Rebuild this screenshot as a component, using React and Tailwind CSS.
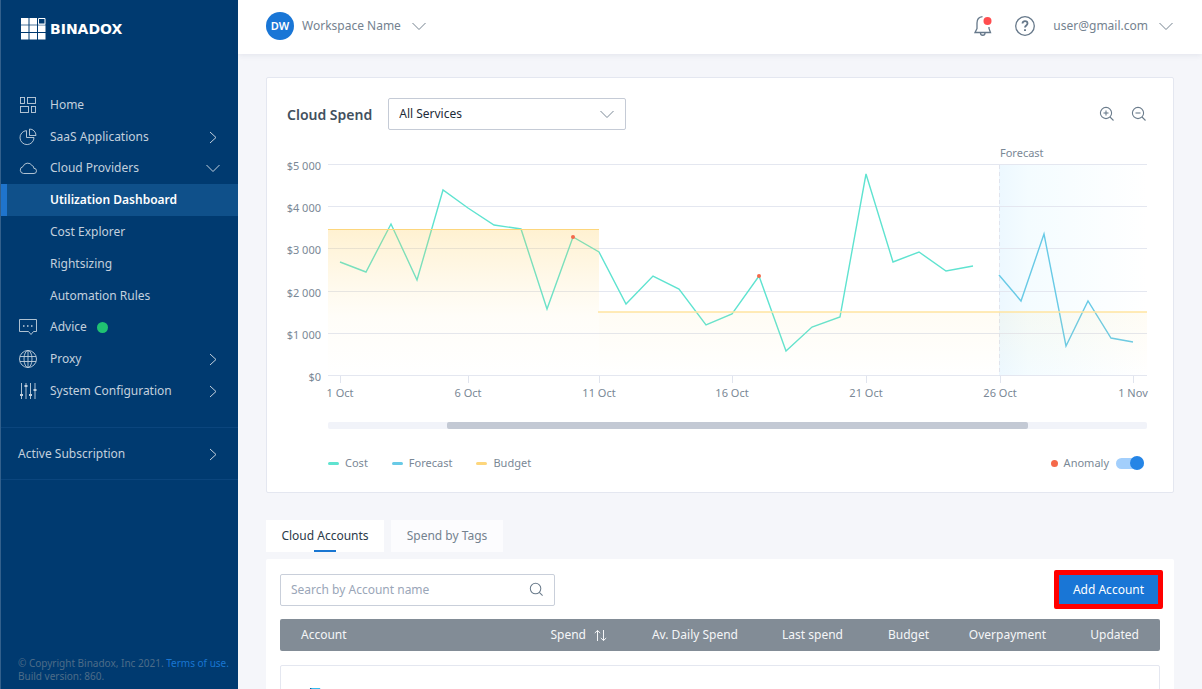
import React, { useState } from 'react';

const navItems = [
  { label: 'Home', icon: 'home' },
  { label: 'SaaS Applications', icon: 'pie', arrow: 'right' },
  { label: 'Cloud Providers', icon: 'cloud', arrow: 'down' },
  { label: 'Utilization Dashboard', active: true },
  { label: 'Cost Explorer' },
  { label: 'Rightsizing' },
  { label: 'Automation Rules' },
  { label: 'Advice', icon: 'advice', dot: true },
  { label: 'Proxy', icon: 'globe', arrow: 'right' },
  { label: 'System Configuration', icon: 'sliders', arrow: 'right' },
];

const yTicks = [
  { label: '$5 000', y: 0 },
  { label: '$4 000', y: 42 },
  { label: '$3 000', y: 84 },
  { label: '$2 000', y: 127 },
  { label: '$1 000', y: 169 },
  { label: '$0', y: 211 },
];

const xTicks = [
  { label: '1 Oct', x: 12 },
  { label: '6 Oct', x: 140 },
  { label: '11 Oct', x: 271 },
  { label: '16 Oct', x: 404 },
  { label: '21 Oct', x: 538 },
  { label: '26 Oct', x: 672 },
  { label: '1 Nov', x: 805 },
];

const costLine =
  '12,97 38,107 63,59 89,115 115,25 140,43 166,60 193,64 219,144 245,72 271,87 298,139 325,111 351,124 378,160 404,149 431,111 458,186 484,162 512,152 538,9 565,97 591,87 618,106 645,101';
const forecastLine = '671,110 693,136 716,69 738,181 760,136 783,173 805,177';

const anomalies = [
  { x: 245, y: 72 },
  { x: 431, y: 111 },
];

const Chevron = ({ dir = 'down', className }) => (
  <svg viewBox="0 0 14 14" className={className} fill="none" stroke="currentColor" strokeWidth="1" aria-hidden="true">
    {dir === 'right' ? <path d="M4 2l6 5.5L4 13" /> : <path d="M0.500 4l6.500 6.500L13.500 4" />}
  </svg>
);

const NavIcon = ({ name }) => {
  const shapes = {
    home: (
      <>
        <rect x="1.5" y="1.5" width="4" height="6" />
        <rect x="8.5" y="1.5" width="8" height="6" />
        <rect x="1.5" y="10.5" width="8" height="6" />
        <rect x="12.5" y="10.5" width="4" height="6" />
      </>
    ),
    pie: (
      <>
        <path d="M7.5 2.6A7 7 0 1 0 15 9.500H7.500z" />
        <path d="M10.500 1v6.500h6.500A6.500 6.500 0 0 0 10.500 1z" />
      </>
    ),
    cloud: <path d="M4.500 14.500a3.500 3.500 0 0 1-.5-6.900A5 5 0 0 1 13 6.500a2.500 2.500 0 0 1 1.800 2.800 2.600 2.600 0 0 1 .2 5.200z" />,
    advice: (
      <>
        <path d="M.5 1.500h17v12h-3l-2.500 3-2.500-3H.5z" />
        <path d="M4 8h1.500M8 8h1.500M12 8h1.500" strokeWidth="1.500" />
      </>
    ),
    globe: (
      <>
        <circle cx="9" cy="9" r="8.500" />
        <ellipse cx="9" cy="9" rx="4" ry="8.500" />
        <path d="M9 .5v17M1 6.500h16M1 11.500h16" />
      </>
    ),
    sliders: (
      <>
        <path d="M2.500 1v16M7 1v16M11.500 1v16M16 1v16" />
        <path d="M1 13h3M5.500 4h3M10 13h3M14.500 8h3" strokeWidth="2" />
      </>
    ),
  };
  return (
    <svg viewBox="0 0 18 18" className="h-[18px] w-[18px]" fill="none" stroke="currentColor" strokeWidth="0.9" aria-hidden="true">
      {shapes[name]}
    </svg>
  );
};

const Magnifier = ({ sign, className }) => (
  <svg viewBox="0 0 16 16" className={className} fill="none" stroke="currentColor" strokeWidth="1.1" aria-hidden="true">
    <circle cx="7" cy="7" r="5.600" />
    <path d="M11 11l3.500 3.500" />
    {sign && <path d="M4.500 7h5" />}
    {sign === 'plus' && <path d="M7 4.500v5" />}
  </svg>
);

const Logo = () => (
  <a href="#home" className="flex items-center gap-1 text-white">
    <svg viewBox="0 0 25 22" className="h-[22px] w-[25px]" fill="currentColor" aria-hidden="true">
      <path d="M0 0h7.500v6H0zM8.500 0H16v6H8.500zM0 8h7.500v6H0zM8.500 8H16v6H8.500zM17 8h7.500v6H17zM0 15h7.500v6.500H0zM8.500 15H16v6.500H8.500zM17 15h7.500v6.500H17z" />
      <path d="M0 6h7.500v2H0zM8.500 6H16v2H8.500zM17 6h7.500v2H17z" opacity="0.65" />
      <path d="M17.500.5h6.500v5.500h-6.500z" fill="#003a70" stroke="currentColor" />
    </svg>
    <span className="font-['DejaVu_Sans',sans-serif] text-[14px] leading-none font-bold">BINADOX</span>
  </a>
);

const Sidebar = () => (
  <aside className="flex w-[238px] shrink-0 flex-col border-l border-[#33608c] bg-[#003a70] text-[12px] text-[#c3d0dd]">
    <div className="flex h-[89px] items-start pt-[18px] pl-5">
      <Logo />
    </div>
    <nav className="flex h-[318px] flex-col">
      {navItems.map((item) => (
        <a
          key={item.label}
          href="#nav"
          className={
            item.active
              ? 'flex flex-1 items-center border-l-[6px] border-[#1f74cc] bg-[#0f508a] pl-[43px] font-semibold text-white'
              : 'flex flex-1 items-center pr-[18px] pl-[18px]'
          }
        >
          {!item.active && <span className="w-[31px]">{item.icon && <NavIcon name={item.icon} />}</span>}
          <span>{item.label}</span>
          {item.dot && <span className="ml-[10px] h-[11px] w-[11px] rounded-full bg-[#20c272]" />}
          {item.arrow && <Chevron dir={item.arrow} className="ml-auto h-[14px] w-[14px]" />}
        </a>
      ))}
    </nav>
    <a href="#subscription" className="mt-[20px] flex h-[53px] items-center justify-between border-y border-[#0b457d] pr-[18px] pl-[17px]">
      Active Subscription
      <Chevron dir="right" className="h-[14px] w-[14px]" />
    </a>
    <footer className="mt-auto pb-[6px] pl-[17px] text-[10px] leading-[13px] text-[#4d6c88]">
      <p>
        © Copyright Binadox, Inc 2021.{' '}
        <a href="#terms" className="text-[#1976d2]">
          Terms of use.
        </a>
      </p>
      <p>Build version: 860.</p>
    </footer>
  </aside>
);

const Header = () => (
  <header className="relative flex h-[54px] shrink-0 items-center justify-between bg-white pr-[29px] pb-[2px] pl-7 text-[12px] text-[#74828f] shadow-[0_1px_6px_rgba(60,70,110,0.1)]">
    <button className="flex items-center">
      <span className="flex h-7 w-7 items-center justify-center rounded-full bg-[#1976d6] text-[11px] font-semibold text-white">DW</span>
      <span className="ml-2">Workspace Name</span>
      <Chevron className="ml-[11px] h-[14px] w-[14px]" />
    </button>
    <div className="flex items-center">
      <button aria-label="Notifications">
        <svg viewBox="0 0 20 22" className="h-[22px] w-5" fill="none" stroke="#66788a" strokeWidth="1.300">
          <path d="M9.500 1.700C5.500 2.200 4 5 4 8v5.500L2 17.500h15.500L16 13.500v-1.500" />
          <path d="M7.500 18a2.200 2.200 0 0 0 4.500 0" />
          <circle cx="14.500" cy="6" r="4" fill="#ff4d4f" stroke="none" />
        </svg>
      </button>
      <button aria-label="Help" className="ml-[21px]">
        <svg viewBox="0 0 22 22" className="h-[22px] w-[22px]" fill="none" stroke="#66788a">
          <circle cx="11" cy="11" r="9.300" strokeWidth="1.300" />
          <path d="M8.500 8.500c0-3.200 5-3 5 0 0 1.900-2.500 2-2.500 4" strokeWidth="1.800" />
          <path d="M11 14.200v1.900" strokeWidth="1.900" />
        </svg>
      </button>
      <button className="ml-[17px] flex items-center">
        user@gmail.com
        <Chevron className="ml-[11px] h-[14px] w-[14px]" />
      </button>
    </div>
  </header>
);

const SpendChart = () => (
  <svg viewBox="0 0 860 255" className="mt-[15px] h-auto w-full overflow-visible text-[11px]" role="img" aria-label="Cloud spend by day">
    <defs>
      <linearGradient id="budgetFill" x1="0" y1="0" x2="0" y2="1">
        <stop offset="0" stopColor="#ffc94d" stopOpacity="0.26" />
        <stop offset="0.6" stopColor="#ffd978" stopOpacity="0.05" />
        <stop offset="1" stopColor="#ffd978" stopOpacity="0" />
      </linearGradient>
      <linearGradient id="budgetFillLow" x1="0" y1="0" x2="0" y2="1">
        <stop offset="0" stopColor="#ffd978" stopOpacity="0.08" />
        <stop offset="1" stopColor="#ffd978" stopOpacity="0" />
      </linearGradient>
      <linearGradient id="forecastFill" x1="0" y1="0" x2="1" y2="0">
        <stop offset="0" stopColor="#edf8ff" />
        <stop offset="0.2" stopColor="#f4fcff" />
        <stop offset="1" stopColor="#ffffff" />
      </linearGradient>
    </defs>
    <g transform="translate(41 20)">
      <rect x="671" y="0" width="148" height="211" fill="url(#forecastFill)" />
      {yTicks.map((t) => (
        <g key={t.label}>
          <path d={`M0 ${t.y - 0.5}H819`} stroke="#e4e7f0" />
          <text x="-7" y={t.y + 5} textAnchor="end" fill="#7a8896">
            {t.label}
          </text>
        </g>
      ))}
      {xTicks.map((t) => (
        <g key={t.label}>
          <path d={`M${t.x + 0.5} 211v7`} stroke="#e0e4ee" />
          <text x={t.x} y="232" textAnchor="middle" fill="#7a8896">
            {t.label}
          </text>
        </g>
      ))}
      <path d="M671.500 0V211" stroke="#e0e4ee" strokeDasharray="4 3" />
      <text x="672" y="-8" fill="#7a8896">
        Forecast
      </text>
      <polyline points={costLine} fill="none" stroke="#5fe3d0" strokeWidth="1.400" />
      <polyline points={forecastLine} fill="none" stroke="#68cae6" strokeWidth="1.400" />
      <rect x="0" y="64" width="271" height="147" fill="url(#budgetFill)" />
      <rect x="271" y="147" width="548" height="64" fill="url(#budgetFillLow)" />
      <path d="M0 64.500H271" stroke="#fdd67c" />
      <path d="M270 147H819" stroke="#ffe5a0" strokeWidth="1.500" />
      {anomalies.map((p) => (
        <circle key={p.x} cx={p.x} cy={p.y} r="2" fill="#f5694a" />
      ))}
    </g>
  </svg>
);

const LegendItem = ({ color, label }) => (
  <li className="flex items-center">
    <span className={`h-[3px] w-[11px] rounded-xs ${color}`} />
    <span className="ml-[6px]">{label}</span>
  </li>
);

const CloudSpendCard = () => {
  const [anomaly, setAnomaly] = useState(true);

  return (
    <section className="rounded-xs border border-[#e4e7f0] bg-white pt-5 pr-[26px] pb-5 pl-5">
      <div className="flex items-center">
        <h2 className="text-[14px] font-semibold text-[#42505e]">Cloud Spend</h2>
        <div className="relative ml-4 w-[238px]">
          <select aria-label="Service" className="h-8 w-full appearance-none rounded-xs border border-[#c5cbd6] bg-white px-[10px] text-[12px] text-[#1d2b38]">
            <option>All Services</option>
          </select>
          <Chevron className="pointer-events-none absolute top-[9px] right-3 h-[14px] w-[14px] text-[#7a8896]" />
        </div>
        <div className="ml-auto flex items-center gap-4 text-[#6b7c8c]">
          <button aria-label="Zoom in">
            <Magnifier sign="plus" className="h-4 w-4" />
          </button>
          <button aria-label="Zoom out">
            <Magnifier sign="minus" className="h-4 w-4" />
          </button>
        </div>
      </div>

      <SpendChart />

      {/* Visible range */}
      <div className="mt-[22px] ml-[41px] h-[7px] rounded-xs bg-[#f1f3f9]">
        <div className="ml-[14.5%] h-full w-[71%] rounded-xs bg-[#c3c9d4]" />
      </div>

      <div className="mt-[25px] ml-[41px] flex h-[18px] items-center justify-between text-[11px] text-[#7a8896]">
        <ul className="flex items-center gap-[24px]">
          <LegendItem color="bg-[#5fe3d0]" label="Cost" />
          <LegendItem color="bg-[#68cae6]" label="Forecast" />
          <LegendItem color="bg-[#fdd67c]" label="Budget" />
        </ul>
        <label className="mr-[3px] flex items-center">
          <span className="h-[7px] w-[7px] rounded-full bg-[#f5694a]" />
          <span className="ml-[6px]">Anomaly</span>
          <input type="checkbox" className="peer sr-only" checked={anomaly} onChange={() => setAnomaly(!anomaly)} />
          <span className="ml-[7px] flex h-[11px] w-7 items-center rounded-full bg-[#a3cffc] peer-checked:justify-end">
            <span className="h-[14px] w-[14px] shrink-0 rounded-full bg-[#2585e6]" />
          </span>
        </label>
      </div>
    </section>
  );
};

const AccountsTable = () => (
  <table className="w-full table-fixed border-separate border-spacing-x-0 border-spacing-y-[14px] text-[12px]">
    <thead>
      <tr className="h-8 bg-[#828c96] text-right text-[#f5f6f8]">
        <th className="rounded-l-xs pl-[21px] text-left font-normal">Account</th>
        <th className="w-[120px] pr-[21px] font-normal">
          <button className="inline-flex items-center gap-2">
            Spend
            <svg viewBox="0 0 13 13" className="h-[13px] w-[13px]" fill="none" stroke="currentColor" strokeWidth="1" aria-hidden="true">
              <path d="M3.500 12V1.500M.8 4l2.700-2.500L6.200 4M9.500 1v10.500M6.800 9l2.700 2.500L12.200 9" />
            </svg>
          </button>
        </th>
        <th className="w-[131px] pr-[21px] font-normal">Av. Daily Spend</th>
        <th className="w-[105px] pr-[21px] font-normal">Last spend</th>
        <th className="w-[86px] pr-[21px] font-normal">Budget</th>
        <th className="w-[117px] pr-[21px] font-normal">Overpayment</th>
        <th className="w-[93px] rounded-r-xs pr-[21px] font-normal">Updated</th>
      </tr>
    </thead>
    <tbody>
      <tr>
        <td colSpan={7} className="rounded-xs border border-[#e4e7f0] px-[28px] py-[22px]">
          <svg viewBox="0 0 26 24" className="h-6 w-[26px]" aria-label="Azure">
            <path d="M1 0h2L1 22H0z" fill="#0f5a9e" />
            <path d="M2 0h9l8 22H8l6-4z" fill="#32bdf0" />
          </svg>
        </td>
      </tr>
    </tbody>
  </table>
);

const App = () => (
  <div className="flex h-screen overflow-hidden bg-[#f5f6fa] font-['Noto_Sans',sans-serif]">
    <Sidebar />
    <div className="flex min-w-0 flex-1 flex-col">
      <Header />
      <main className="flex-1 overflow-hidden px-7 pt-[23px]">
        <CloudSpendCard />

        {/* Accounts */}
        <div className="mt-[27px] flex gap-[7px] text-[12px]" role="tablist">
          <button role="tab" aria-selected="true" className="relative h-8 w-[118px] bg-white text-[#2b3a48]">
            Cloud Accounts
            <span className="absolute bottom-0 left-1/2 h-[2px] w-[22px] -translate-x-1/2 bg-[#1976d2]" />
          </button>
          <button role="tab" aria-selected="false" className="h-8 w-[112px] bg-[#fcfcfe] text-[#74828f]">
            Spend by Tags
          </button>
        </div>
        <section className="mt-[7px] rounded-xs bg-white px-[14px] pt-[11px]">
          <div className="flex items-center justify-between">
            <div className="relative w-[275px]">
              <input
                type="text"
                aria-label="Search by Account name"
                placeholder="Search by Account name"
                className="h-8 w-full rounded-xs border border-[#c9cfda] pr-9 pl-[10px] text-[12px] placeholder:text-[#9aa6b8]"
              />
              <Magnifier className="absolute top-2 right-[11px] h-[15px] w-[15px] text-[#6b7c8c]" />
            </div>
            <button className="-mr-[3px] h-[39px] w-[109px] rounded-xs border-5 border-[#ff0000] bg-[#1976d6] text-[12px] text-white">Add Account</button>
          </div>
          <div className="-mt-[4px]">
            <AccountsTable />
          </div>
        </section>
      </main>
    </div>
  </div>
);

export default App;
